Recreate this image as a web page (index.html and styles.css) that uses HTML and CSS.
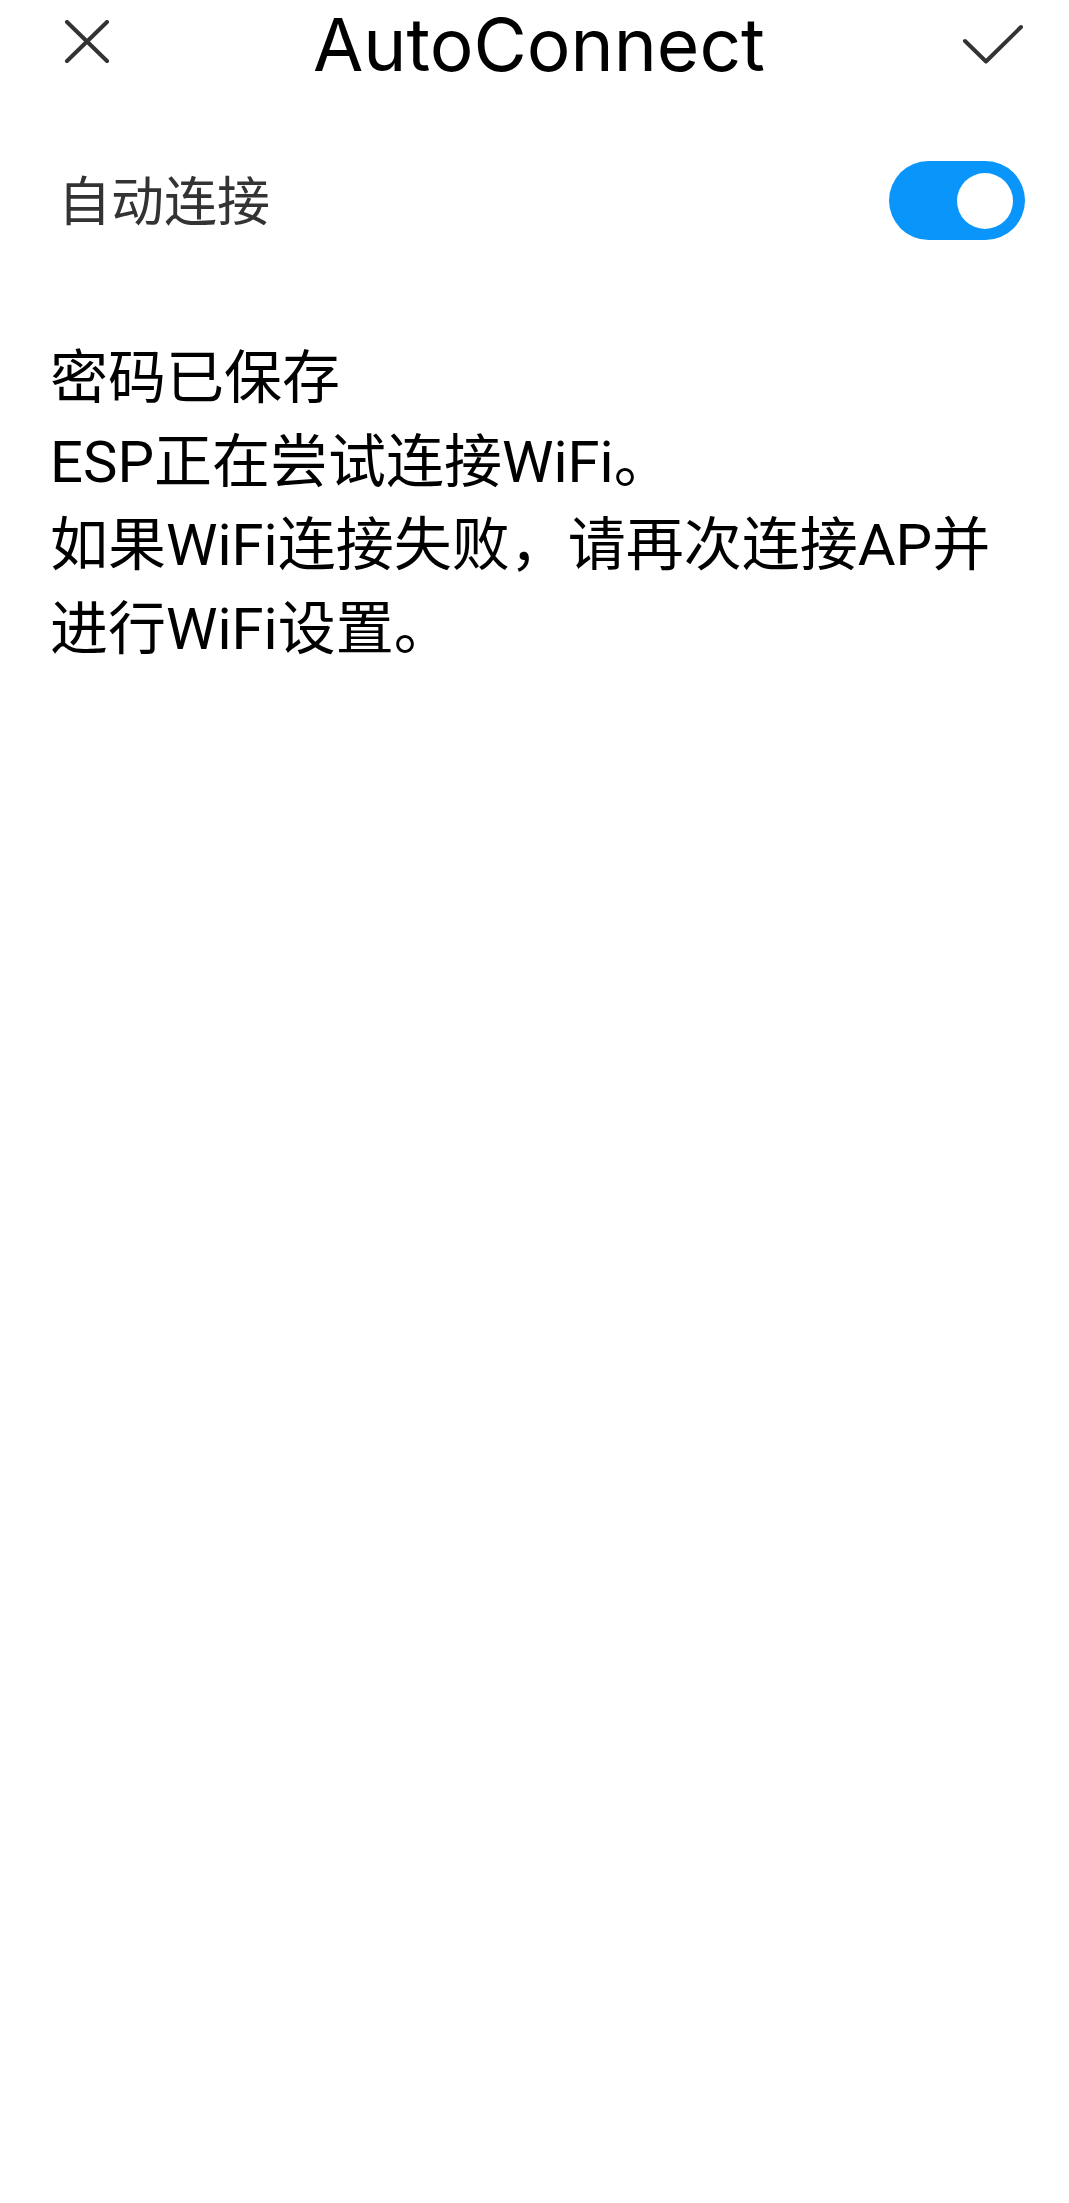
FILE: index.html
```html
<!DOCTYPE html>
<html lang="zh-CN">
<head>
<meta charset="utf-8">
<title>AutoConnect</title>
<link rel="stylesheet" href="styles.css">
</head>
<body>
<div class="page">
  <header class="topbar">
    <div class="icon-btn close-btn" aria-label="关闭">
      <svg width="48" height="48" viewBox="0 0 48 48">
        <path d="M4 2 L44 41 M44 2 L4 41" fill="none" stroke="#333" stroke-width="4" stroke-linecap="round"/>
      </svg>
    </div>
    <h1 class="title">AutoConnect</h1>
    <div class="icon-btn confirm-btn" aria-label="确定">
      <svg width="64" height="48" viewBox="0 0 64 48">
        <path d="M4 20 L25 40.5 L60 6" fill="none" stroke="#333" stroke-width="4" stroke-linecap="round" stroke-linejoin="round"/>
      </svg>
    </div>
  </header>

  <div class="setting-row">
    <span class="setting-label">自动连接</span>
    <div class="switch is-on" role="switch" aria-checked="true">
      <span class="switch-knob"></span>
    </div>
  </div>

  <div class="message">
    密码已保存<br>ESP正在尝试连接WiFi。<br>如果WiFi连接失败，请再次连接AP并进行WiFi设置。
  </div>
</div>
</body>
</html>
```

FILE: styles.css
```css
html, body {
  margin: 0;
  padding: 0;
  background: #ffffff;
}

body {
  font-family: "Roboto", "Noto Sans CJK SC", sans-serif;
  color: #000000;
}

.page {
  width: 1069px;
  min-height: 2203px;
  box-sizing: border-box;
}

.topbar {
  display: flex;
  align-items: center;
  height: 90px;
  padding: 0 44px 0 63px;
}

.icon-btn {
  display: flex;
  align-items: center;
  justify-content: center;
  flex: none;
}

.icon-btn svg {
  display: block;
}

.close-btn {
  width: 48px;
  height: 48px;
  margin-top: -3px;
}

.confirm-btn {
  width: 64px;
  height: 48px;
}

.title {
  flex: 1;
  margin: 0;
  padding-left: 6px;
  text-align: center;
  font-family: "Inter", "Roboto", sans-serif;
  font-size: 73px;
  font-weight: 400;
  line-height: 90px;
  color: #000000;
}

.setting-row {
  display: flex;
  align-items: center;
  justify-content: space-between;
  padding: 71px 44px 0 58px;
}

.setting-label {
  font-size: 53px;
  line-height: 62px;
  color: #333333;
  padding-top: 4px;
}

.switch {
  display: flex;
  align-items: center;
  justify-content: flex-end;
  box-sizing: border-box;
  width: 136px;
  height: 79px;
  padding: 0 12px;
  border-radius: 40px;
  background: #0a95fa;
}

.switch-knob {
  display: block;
  width: 56px;
  height: 56px;
  border-radius: 50%;
  background: #ffffff;
}

.message {
  margin-top: 97px;
  padding: 0 50px;
  font-size: 58px;
  line-height: 83.5px;
  color: #000000;
}
```
